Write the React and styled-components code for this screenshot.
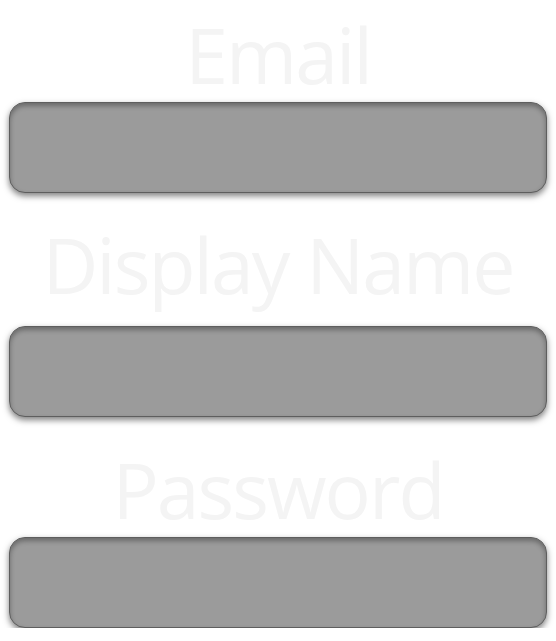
import React from "react";
import styled, { createGlobalStyle } from "styled-components";

const Global = createGlobalStyle`
  html, body { margin: 0; padding: 0; background: #ffffff; }
  body { font-family: "Open Sans", "Noto Sans", sans-serif; }
`;

const Form = styled.form`
  display: flex;
  flex-direction: column;
  padding: 16px 9px 0;
`;

const Field = styled.div`
  display: flex;
  flex-direction: column;
  margin-top: ${(p) => p.$top}px;
`;

const Label = styled.label`
  display: block;
  text-align: center;
  font-size: 77px;
  line-height: 78px;
  letter-spacing: -2px;
  font-weight: 400;
  color: #f4f4f4;
  margin-bottom: ${(p) => p.$gap}px;
  white-space: nowrap;
`;

const Input = styled.input`
  box-sizing: border-box;
  display: block;
  width: 100%;
  height: 91px;
  border: 1px solid #5e5e5e;
  border-radius: 16px;
  background: #9b9b9b;
  box-shadow: 0 3px 6px rgba(0, 0, 0, 0.5), inset 0 3px 5px rgba(0, 0, 0, 0.32);
  outline: none;
  padding: 0 16px;
  font-family: inherit;
  font-size: 24px;
  color: #fff;
`;

const fields = [
  { label: "Email", type: "email", top: 0, gap: 8 },
  { label: "Display Name", type: "text", top: 33, gap: 22 },
  { label: "Password", type: "password", top: 34, gap: 8 },
];

export default function App() {
  return (
    <>
      <Global />
      <Form onSubmit={(e) => e.preventDefault()}>
        {fields.map((f) => (
          <Field key={f.label} $top={f.top}>
            <Label $gap={f.gap}>{f.label}</Label>
            <Input type={f.type} />
          </Field>
        ))}
      </Form>
    </>
  );
}
